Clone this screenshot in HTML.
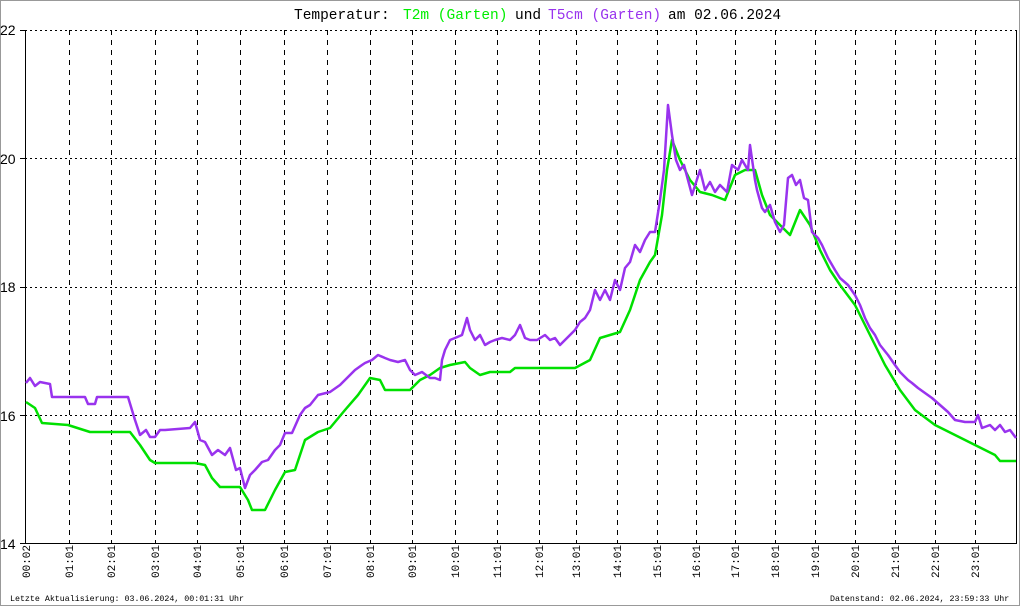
<!DOCTYPE html>
<html><head><style>
body{margin:0;background:#fff}
svg{display:block}
</style></head><body>
<svg width="1020" height="606" xmlns="http://www.w3.org/2000/svg">
<rect x="0.5" y="0.5" width="1019" height="605" fill="#fff" stroke="#999"/>
<g font-family="Liberation Mono, monospace" font-size="14.5">
<text x="294" y="19" fill="#000">Temperatur:</text>
<text x="403" y="19" fill="#00ee00">T2m (Garten)</text>
<text x="515" y="19" fill="#000">und</text>
<text x="548" y="19" fill="#9933ee">T5cm (Garten)</text>
<text x="668" y="19" fill="#000">am 02.06.2024</text>
</g>
<g stroke="#000" stroke-width="1" stroke-dasharray="2,3" fill="none" shape-rendering="crispEdges">
<line x1="25" y1="30.5" x2="1016" y2="30.5"/>
<line x1="25" y1="158.5" x2="1016" y2="158.5"/>
<line x1="25" y1="287.5" x2="1016" y2="287.5"/>
<line x1="25" y1="415.5" x2="1016" y2="415.5"/>
</g>
<g stroke="#000" stroke-width="1" stroke-dasharray="5,5" fill="none" shape-rendering="crispEdges">
<path d="M69.5 30V543M111.5 30V543M155.5 30V543M197.5 30V543M240.5 30V543M284.5 30V543M327.5 30V543M370.5 30V543M412.5 30V543M455.5 30V543M497.5 30V543M539.5 30V543M576.5 30V543M617.5 30V543M657.5 30V543M696.5 30V543M735.5 30V543M775.5 30V543M815.5 30V543M855.5 30V543M895.5 30V543M935.5 30V543M975.5 30V543"/>
</g>
<g stroke="#000" stroke-width="1" fill="none" shape-rendering="crispEdges">
<path d="M25.5 30V543.5H1016.5V30M20 30.5H25M20 158.5H25M20 287.5H25M20 415.5H25M20 543.5H25"/>
</g>
<g font-family="Liberation Sans, sans-serif" font-size="14" fill="#000">
<text x="0" y="35">22</text><text x="0" y="164">20</text><text x="0" y="292">18</text><text x="0" y="421">16</text><text x="0" y="549">14</text>
</g>
<g font-family="Liberation Mono, monospace" font-size="11" fill="#000">
<text transform="translate(30,578) rotate(-90)">00:02</text>
<text transform="translate(73,578) rotate(-90)">01:01</text>
<text transform="translate(115,578) rotate(-90)">02:01</text>
<text transform="translate(159,578) rotate(-90)">03:01</text>
<text transform="translate(201,578) rotate(-90)">04:01</text>
<text transform="translate(244,578) rotate(-90)">05:01</text>
<text transform="translate(288,578) rotate(-90)">06:01</text>
<text transform="translate(331,578) rotate(-90)">07:01</text>
<text transform="translate(374,578) rotate(-90)">08:01</text>
<text transform="translate(416,578) rotate(-90)">09:01</text>
<text transform="translate(459,578) rotate(-90)">10:01</text>
<text transform="translate(501,578) rotate(-90)">11:01</text>
<text transform="translate(543,578) rotate(-90)">12:01</text>
<text transform="translate(580,578) rotate(-90)">13:01</text>
<text transform="translate(621,578) rotate(-90)">14:01</text>
<text transform="translate(661,578) rotate(-90)">15:01</text>
<text transform="translate(700,578) rotate(-90)">16:01</text>
<text transform="translate(739,578) rotate(-90)">17:01</text>
<text transform="translate(779,578) rotate(-90)">18:01</text>
<text transform="translate(819,578) rotate(-90)">19:01</text>
<text transform="translate(859,578) rotate(-90)">20:01</text>
<text transform="translate(899,578) rotate(-90)">21:01</text>
<text transform="translate(939,578) rotate(-90)">22:01</text>
<text transform="translate(979,578) rotate(-90)">23:01</text>
</g>
<g font-family="Liberation Mono, monospace" font-size="8.3" fill="#000">
<text x="10" y="601">Letzte Aktualisierung: 03.06.2024, 00:01:31 Uhr</text>
<text x="830" y="601">Datenstand: 02.06.2024, 23:59:33 Uhr</text>
</g>
<polyline fill="none" stroke="#00e000" stroke-width="2.5" stroke-linejoin="round" points="26,402 35,408 42,423 68,425 90,432 130,432 140,445 150,460 155,463 195,463 205,465 212,478 220,487 240,487 248,500 252,510 265,510 275,490 285,472 295,470 305,440 318,432 330,428 345,410 358,395 370,378 380,380 385,390 410,390 420,380 430,375 440,368 450,365 465,362 470,368 480,375 490,372 510,372 515,368 575,368 590,360 600,338 620,332 630,310 640,280 650,262 655,255 662,215 667,170 672,140 680,160 690,180 700,192 712,195 725,200 735,175 745,170 755,170 762,195 770,215 785,230 790,235 800,210 810,225 820,250 830,270 840,285 855,305 870,335 885,365 900,390 915,410 935,425 955,435 975,445 995,455 1000,461 1016,461"/>
<polyline fill="none" stroke="#9933ee" stroke-width="2.5" stroke-linejoin="round" points="26,383 30,378 35,386 40,382 50,384 52,397 85,397 88,404 95,404 97,397 128,397 135,420 140,435 146,430 150,437 155,437 160,430 165,430 190,428 195,422 200,440 205,442 212,455 218,450 225,455 230,448 236,470 240,468 245,488 250,475 255,470 262,462 268,460 275,450 280,445 285,433 292,433 300,415 305,408 310,405 318,395 330,392 340,385 345,380 355,370 362,365 365,363 372,360 378,355 385,358 390,360 398,362 405,360 410,370 415,375 422,372 430,378 435,378 440,380 442,360 445,350 450,340 455,338 462,335 467,318 470,330 475,340 480,335 485,345 490,342 495,340 502,338 510,340 515,335 520,325 525,338 530,340 537,340 545,335 550,340 555,338 560,345 567,338 575,330 580,322 585,318 590,310 595,290 600,300 605,290 610,300 615,280 620,290 625,268 630,262 635,245 640,252 645,240 650,232 655,232 660,200 664,170 668,105 672,135 676,160 680,170 684,165 688,180 692,195 700,170 705,190 710,182 715,192 720,185 727,192 732,165 738,170 742,160 748,170 750,145 755,180 757,190 762,208 765,212 770,205 775,222 780,232 784,225 788,178 792,175 796,185 800,180 804,198 808,200 812,232 818,238 822,245 828,258 835,270 840,278 848,285 855,295 860,305 865,318 870,328 875,335 880,345 888,355 895,365 900,372 908,380 912,383 918,388 925,393 932,398 940,405 948,412 955,420 965,422 975,422 978,415 982,428 990,425 995,430 1000,425 1005,432 1010,430 1016,438"/>
</svg>
</body></html>
